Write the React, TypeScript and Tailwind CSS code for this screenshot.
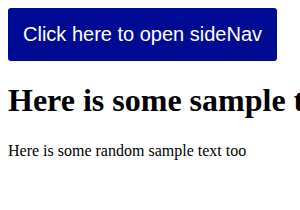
import React from "react";

const App: React.FC = () => {
  return (
    <div className="min-h-[210px] overflow-hidden bg-white p-2 font-['Liberation_Serif',serif] text-black">
      <button
        type="button"
        className="rounded-[3px] bg-[#000b94] px-[15px] py-[15px] font-['Liberation_Sans',Arial,sans-serif] text-[20px] leading-[23px] text-white"
      >
        Click here to open sideNav
      </button>
      <h1 className="my-[21.44px] whitespace-nowrap text-[32px] font-bold leading-[normal]">
        Here is some sample text
      </h1>
      <p className="mt-[23px] text-[16px] leading-[normal]">
        Here is some random sample text too
      </p>
    </div>
  );
};

export default App;
